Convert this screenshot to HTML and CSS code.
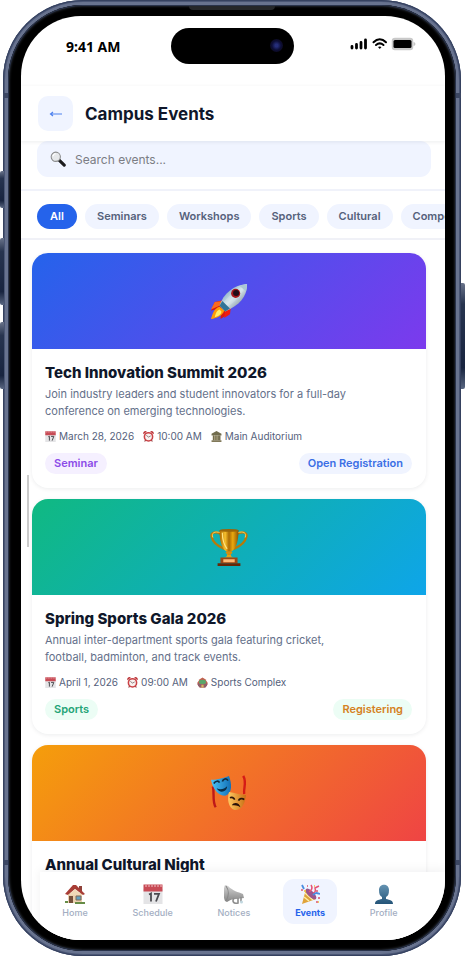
FILE: index.html
```html
<!DOCTYPE html>
<html lang="en">
<head>
<meta charset="UTF-8">
<meta name="viewport" content="width=device-width, initial-scale=1.0">
<title>Campus Events</title>
<link rel="stylesheet" href="styles.css">
</head>
<body>
<!-- shared icons -->
<svg class="sprite" aria-hidden="true">
    <defs>
        <linearGradient id="steel" x1="0" y1="0" x2="1" y2="1">
            <stop offset="0" stop-color="#3c7899"/>
            <stop offset="0.5" stop-color="#d5e6ee"/>
            <stop offset="1" stop-color="#51616f"/>
        </linearGradient>
        <linearGradient id="gold" x1="0" x2="1">
            <stop offset="0" stop-color="#a96500"/>
            <stop offset="0.3" stop-color="#f7c02c"/>
            <stop offset="0.5" stop-color="#a96a05"/>
            <stop offset="0.7" stop-color="#e9a90f"/>
            <stop offset="1" stop-color="#8b5204"/>
        </linearGradient>
        <linearGradient id="blueMask" x1="0" x2="1">
            <stop offset="0" stop-color="#4cc4f8"/>
            <stop offset="1" stop-color="#126fb5"/>
        </linearGradient>
        <linearGradient id="goldMask" x1="0" x2="1">
            <stop offset="0" stop-color="#ffc860"/>
            <stop offset="1" stop-color="#c86d13"/>
        </linearGradient>
        <linearGradient id="horn" x1="0" y1="0" x2="0" y2="1">
            <stop offset="0" stop-color="#d4d4d4"/>
            <stop offset="1" stop-color="#858585"/>
        </linearGradient>
        <linearGradient id="person" x1="0" y1="0" x2="0" y2="1">
            <stop offset="0" stop-color="#6493b2"/>
            <stop offset="1" stop-color="#245478"/>
        </linearGradient>
    </defs>
    <symbol id="icon-calendar" viewBox="0 0 20 20">
        <rect x="0.5" y="5" width="19" height="15" fill="#e4e4e6"/>
        <path d="M0.5 0.5h19v7h-19z" fill="#c84b55"/>
        <path d="M3 1v2M6 1v2M9 1v2M12 1v2M15 1v2M18 1v2" stroke="#f1c5c9" stroke-width="1"/>
        <path d="M6 10.500l2-1v8M11 9.800h5l-3 7.700" fill="none" stroke="#4b4b50" stroke-width="1.800"/>
    </symbol>
    <symbol id="icon-clock" viewBox="0 0 20 20">
        <path d="M1 6a4 4 0 0 1 6-5zM19 6a4 4 0 0 0-6-5z" fill="#b92f32"/>
        <path d="M5 16l-2 3M15 16l2 3" stroke="#8c3436" stroke-width="2"/>
        <circle cx="10" cy="10.500" r="7.500" fill="#f8f1ef" stroke="#ca4246" stroke-width="2.800"/>
        <path d="M6 8l4 3 4-2" fill="none" stroke="#6a5558" stroke-width="1.300"/>
    </symbol>
    <symbol id="icon-hall" viewBox="0 0 20 20">
        <path d="M10 0l9 5v3H1V5z" fill="#716c4d"/>
        <path d="M3 8h14v9H3z" fill="#bcb38c"/>
        <path d="M5 8v9M9 8v9M13 8v9M16 8v9" stroke="#514b35" stroke-width="1.700"/>
        <path d="M1 17h18v3H1z" fill="#81795a"/>
    </symbol>
    <symbol id="icon-stadium" viewBox="0 0 20 20">
        <path d="M1 10l4-6 5-3 5 3 4 6v4l-4 5H5l-4-5z" fill="#c2604f"/>
        <ellipse cx="10" cy="9" rx="6.500" ry="4" fill="#59a66a"/>
        <path d="M1 11c5 3 13 3 18 0l-1 5-3 3H5l-3-3z" fill="#8e5f6c"/>
        <path d="M8 14h4v5H8z" fill="#dcb55e"/>
    </symbol>
</svg>

<div class="phone">
    <span class="side-key key-action"></span>
    <span class="side-key key-up"></span>
    <span class="side-key key-down"></span>
    <span class="side-key key-power"></span>
    <span class="antenna antenna-top"></span>
    <span class="antenna antenna-bottom"></span>
    <div class="bezel">
        <span class="speaker"></span>
        <div class="screen">
            <div class="status-bar">
                <span class="time">9:41 AM</span>
                <span class="island"><span class="camera"></span></span>
                <svg class="status-icons" viewBox="0 0 66 14" aria-hidden="true">
                    <path d="M2 9.500v1.500M6.500 7.500v3.500M11 5.500v5.500M15.500 3v8" stroke="#000" stroke-width="2.800" stroke-linecap="round"/>
                    <path d="M23.500 5.200c4-4 8.500-4 12.500 0M26 8c2.500-2.200 5-2.200 7.500 0" fill="none" stroke="#000" stroke-width="2" stroke-linecap="round"/>
                    <path d="M28 10c1-.8 2.500-.8 3.500 0l-1.700 2z" fill="#000"/>
                    <rect x="42.500" y="1.500" width="20" height="11" rx="2.500" fill="#c9c9c9" stroke="#c9c9c9" stroke-width="1.500"/>
                    <rect x="43.500" y="3" width="18" height="8" rx="1.500" fill="#000"/>
                    <path d="M63.500 5c2.500.5 2.500 3.500 0 4z" fill="#c5c5c5"/>
                </svg>
            </div>

            <header class="app-header">
                <button class="back-btn" aria-label="Back">
                    <svg viewBox="0 0 14 10" aria-hidden="true"><path d="M13 5H2M4 3L1.500 5 4 7" fill="none" stroke="#4f82ee" stroke-width="1.200"/></svg>
                </button>
                <h1>Campus Events</h1>
            </header>

            <main class="content">
                <div class="search-wrap">
                    <label class="search-box">
                        <svg viewBox="0 0 18 18" aria-hidden="true">
                            <path d="M10 10l6 6" stroke="#1c1c1e" stroke-width="3.500" stroke-linecap="round"/>
                            <circle cx="6.500" cy="6.500" r="5.200" fill="#e6e8ea" stroke="#8b8c8d" stroke-width="1.200"/>
                            <path d="M3.500 6a3 3 0 0 1 3-3" fill="none" stroke="#fff" stroke-width="1.200"/>
                        </svg>
                        <input type="search" placeholder="Search events..." aria-label="Search events">
                    </label>
                </div>

                <div class="filters">
                    <button class="chip active">All</button>
                    <button class="chip">Seminars</button>
                    <button class="chip">Workshops</button>
                    <button class="chip">Sports</button>
                    <button class="chip">Cultural</button>
                    <button class="chip">Competitions</button>
                </div>

                <div class="event-list">
                    <article class="card">
                        <div class="banner banner-tech">
                            <svg viewBox="0 0 40 40" aria-hidden="true">
                                <path d="M15 19L5 21 1 30l11-2zM21 26l-2 8-8 5 1-12z" fill="#d71912"/>
                                <path d="M5 21l8-1-3 5-9 4z" fill="#fa6b20"/>
                                <path d="M22 26l-1 8-6 4 1-9z" fill="#f01d10"/>
                                <path d="M10 26c-6 2-7 7-9 13 6-1 12-3 14-9z" fill="#ff9d08"/>
                                <path d="M10 29c-4 2-4 5-5 8 4-1 7-3 7-6z" fill="#fff06c"/>
                                <path d="M10 25C14 12 25 3 39 2c0 14-8 22-23 29z" fill="url(#steel)"/>
                                <path d="M13 23C19 15 29 7 37 4c-3 9-10 17-22 24z" fill="#d9e7ec" opacity=".4"/>
                                <path d="M10 25l3-5 8 8-5 3z" fill="#307397"/>
                                <path d="M31 4l8-2-1 8z" fill="#abc7d5"/>
                                <circle cx="27" cy="12" r="4.800" fill="#a5171c"/>
                                <circle cx="27.500" cy="11.500" r="3.200" fill="#210d18"/>
                            </svg>
                        </div>
                        <div class="card-body">
                            <h2>Tech Innovation Summit 2026</h2>
                            <p class="desc">Join industry leaders and student innovators for a full-day conference on emerging technologies.</p>
                            <div class="meta">
                                <span><svg><use href="#icon-calendar"/></svg>March 28, 2026</span>
                                <span><svg><use href="#icon-clock"/></svg>10:00 AM</span>
                                <span><svg><use href="#icon-hall"/></svg>Main Auditorium</span>
                            </div>
                            <div class="tags">
                                <span class="tag tag-purple">Seminar</span>
                                <span class="tag tag-blue">Open Registration</span>
                            </div>
                        </div>
                    </article>

                    <article class="card">
                        <div class="banner banner-sports">
                            <svg viewBox="0 0 40 40" aria-hidden="true">
                                <path d="M11 6C5 3 0 5 2 10c1 5 6 9 13 12M29 6c6-3 11-1 9 4-1 5-6 9-13 12" fill="none" stroke="#b87908" stroke-width="2.400"/>
                                <path d="M11 5C5 3 1 5 3 10M29 5c6-2 10 0 8 5" fill="none" stroke="#ffd45a" stroke-width="1"/>
                                <path d="M10 2h20c0 11-2 20-8 23v5h-4v-5C12 22 10 13 10 2z" fill="url(#gold)"/>
                                <ellipse cx="20" cy="2.500" rx="10" ry="1.500" fill="#9b6509"/>
                                <path d="M13 5c0 9 2 13 5 17" fill="none" stroke="#ffe485" stroke-width="1.200"/>
                                <ellipse cx="20" cy="26" rx="3.500" ry="1.500" fill="#d58e12"/>
                                <path d="M14 31c4 0 4-2 4-3h4c0 1 0 3 4 3z" fill="#e1a119"/>
                                <path d="M11 31h18v6H11z" fill="#9c4715"/>
                                <path d="M14 33h12v3H14z" fill="#ffba76"/>
                                <path d="M8 37h24v3H8z" fill="#682706"/>
                            </svg>
                        </div>
                        <div class="card-body">
                            <h2>Spring Sports Gala 2026</h2>
                            <p class="desc">Annual inter-department sports gala featuring cricket, football, badminton, and track events.</p>
                            <div class="meta">
                                <span><svg><use href="#icon-calendar"/></svg>April 1, 2026</span>
                                <span><svg><use href="#icon-clock"/></svg>09:00 AM</span>
                                <span><svg><use href="#icon-stadium"/></svg>Sports Complex</span>
                            </div>
                            <div class="tags">
                                <span class="tag tag-green">Sports</span>
                                <span class="tag tag-amber">Registering</span>
                            </div>
                        </div>
                    </article>

                    <article class="card">
                        <div class="banner banner-culture">
                            <svg viewBox="0 0 40 40" aria-hidden="true">
                                <path d="M3 13c2 8-1 15 3 22" fill="none" stroke="#be1919" stroke-width="2.500"/>
                                <path d="M35 2c4 7 0 13 1 19" fill="none" stroke="#d51b16" stroke-width="2.500"/>
                                <path d="M1 6c8 0 13-2 19-4 3 8 4 18-4 21C8 23 3 15 1 6z" fill="url(#blueMask)"/>
                                <path d="M4 10c2-3 5-3 6-1M13 8c1-3 4-4 6-1" fill="none" stroke="#102d43" stroke-width="1.800"/>
                                <path d="M7 15c4 2 8 1 11-2 0 6-8 8-11 2z" fill="#082c45"/>
                                <path d="M20 19c6 1 11 3 18 3-1 8-4 16-12 16-7-2-8-12-6-19z" fill="url(#goldMask)"/>
                                <path d="M21 25c2-1 4 0 5 2M30 28c1-2 4-3 6-1" fill="none" stroke="#2c160a" stroke-width="1.800"/>
                                <path d="M23 33c2-4 8-3 9 2-3-2-6-2-9-2z" fill="#291108"/>
                            </svg>
                        </div>
                        <div class="card-body">
                            <h2>Annual Cultural Night</h2>
                        </div>
                    </article>
                </div>
            </main>

            <span class="scroll-thumb"></span>

            <nav class="bottom-nav">
                <a href="#">
                    <svg viewBox="0 0 20 20" aria-hidden="true">
                        <path d="M3 9h14v10H3z" fill="#ead1af"/>
                        <path d="M14 2h3v6h-3z" fill="#8f4139"/>
                        <path d="M0 10L8 1h3l9 9-2 1-8-6-7 6z" fill="#a83d36"/>
                        <path d="M3 11l7-6 7 6z" fill="#f0d9b8"/>
                        <path d="M4 12h4v7H4z" fill="#76503b"/>
                        <path d="M11 12h5v4h-5z" fill="#62a1bf" stroke="#7f6b5b"/>
                        <path d="M0 17h3v2H0zM10 18h10v2H10z" fill="#668c46"/>
                    </svg>
                    Home
                </a>
                <a href="#"><svg><use href="#icon-calendar"/></svg>Schedule</a>
                <a href="#">
                    <svg viewBox="0 0 20 20" aria-hidden="true">
                        <path d="M1 1l3 1c5 5 10 6 15 8l1 4-8 1c-4 0-6 1-9 3l-2-1C-1 12-1 6 1 1z" fill="url(#horn)"/>
                        <path d="M2 2c3 4 3 10 0 15" fill="none" stroke="#888" stroke-width="1.200"/>
                        <path d="M10 14c-2 3-1 6 4 5v-5M17 13v5" fill="none" stroke="#8d8d8d" stroke-width="1.600"/>
                        <circle cx="17.500" cy="18" r="1.500" fill="#c1d7df"/>
                    </svg>
                    Notices
                </a>
                <a href="#" class="active" aria-current="page">
                    <svg viewBox="0 0 20 20" aria-hidden="true">
                        <path d="M6 5l10 10-14 5z" fill="#e0a43b"/>
                        <path d="M5 9l8 7M4 13l5 4" stroke="#fff0a5" stroke-width="1.500"/>
                        <ellipse cx="11" cy="10" rx="3" ry="7" transform="rotate(-45 11 10)" fill="#9b568c"/>
                        <path d="M9 8c3-2 4-4 2-7M13 9c2 0 3-2 2-5l4-2" fill="none" stroke="#e65576" stroke-width="1.500"/>
                        <path d="M13 11c3-3 4-2 7-1M2 1l2 4" fill="none" stroke="#498ce1" stroke-width="1.800"/>
                        <path d="M1 6h2M7 2h1M16 7h2M19 13v2M16 18h2" stroke="#dc566a" stroke-width="1.600"/>
                        <path d="M4 7h2M14 2h1M18 18h1" stroke="#f0bd36" stroke-width="1.500"/>
                    </svg>
                    Events
                </a>
                <a href="#">
                    <svg viewBox="0 0 20 20" aria-hidden="true">
                        <path d="M5 6c0-7 10-7 10 0 0 4-1 6-3 7v2c4 1 7 1 7 5H1c0-4 3-4 7-5v-2C6 12 5 10 5 6z" fill="url(#person)"/>
                    </svg>
                    Profile
                </a>
            </nav>
        </div>
    </div>
</div>
</body>
</html>
```
FILE: styles.css
```css
* {
    box-sizing: border-box;
}
body, html {
    height: 100%;
    margin: 0;
    background: #fff;
    font-family: Inter, "Liberation Sans", sans-serif;
}
h1, h2, p {
    margin: 0;
}
button, input {
    font-family: inherit;
    border: none;
}
button {
    cursor: pointer;
}
a {
    text-decoration: none;
}
.sprite {
    position: absolute;
    width: 0;
    height: 0;
}

/* phone frame */
.phone {
    position: relative;
    height: 100vh;
    margin: 0 4px 0 3px;
    padding: 5px;
    border-radius: 80px;
    background: #68738f;
    box-shadow: inset 0 0 0 1px #35415f, inset 0 0 0 2px #4a5675;
}
.bezel {
    position: relative;
    height: 100%;
    padding: 11px 11px 11px 13px;
    border-radius: 75px;
    background: #000;
    box-shadow: inset 0 0 0 1px #29334b, inset 0 0 2px 2px #1d2026;
}
.speaker {
    position: absolute;
    top: 1px;
    left: 50%;
    width: 86px;
    height: 4px;
    margin-left: -43px;
    border-radius: 0 0 4px 4px;
    background: #25272a;
}
.side-key {
    position: absolute;
    left: -3px;
    width: 4px;
    border-radius: 2px 0 0 2px;
    background: linear-gradient(#69738a, #27344f 20%, #18243f 80%, #596681);
}
.key-action {
    top: 171px;
    height: 37px;
}
.key-up {
    top: 238px;
    height: 67px;
}
.key-down {
    top: 322px;
    height: 67px;
}
.key-power {
    top: 283px;
    left: auto;
    right: -4px;
    height: 106px;
    border-radius: 0 2px 2px 0;
}
.antenna {
    position: absolute;
    left: 0;
    right: 0;
    height: 5px;
    background: #3c4763;
}
.antenna-top {
    top: 93px;
}
.antenna-bottom {
    bottom: 91px;
}
.screen {
    position: relative;
    display: flex;
    flex-direction: column;
    height: 100%;
    overflow: hidden;
    border-radius: 60px;
    background: #fff;
}

/* status bar */
.status-bar {
    position: relative;
    display: flex;
    flex-shrink: 0;
    justify-content: space-between;
    align-items: center;
    height: 70px;
    padding: 0 29px 10px 45px;
}
.time {
    font-family: "Noto Sans", sans-serif;
    font-size: 14px;
    font-weight: 700;
}
.island {
    position: absolute;
    top: 12px;
    left: 50%;
    width: 123px;
    height: 36px;
    margin-left: -62px;
    border-radius: 18px;
    background: #000;
}
.camera {
    position: absolute;
    top: 11px;
    right: 11px;
    width: 13px;
    height: 13px;
    border-radius: 50%;
    background: radial-gradient(#252d79 15%, #0c0d35 50%, #0d080d);
}
.status-icons {
    width: 66px;
    height: 14px;
    margin-bottom: 4px;
}

/* header */
.app-header {
    position: relative;
    z-index: 1;
    display: flex;
    flex-shrink: 0;
    align-items: center;
    gap: 12px;
    height: 55px;
    padding: 0 17px;
    background: #fff;
    box-shadow: 0 1px 4px rgba(15, 23, 42, 0.08);
}
.back-btn {
    display: flex;
    justify-content: center;
    align-items: center;
    width: 35px;
    height: 35px;
    padding: 0;
    border-radius: 10px;
    background: #f0f4ff;
}
.back-btn svg {
    width: 14px;
    height: 10px;
}
.app-header h1 {
    color: #0f172a;
    font-size: 17px;
    font-weight: 700;
}

/* search and filters */
.content {
    flex: 1;
    min-height: 0;
    overflow: hidden;
}
.search-wrap {
    padding: 0 14px 12px 16px;
    border-bottom: 2px solid #f0f2fa;
}
.search-box {
    display: flex;
    align-items: center;
    gap: 9px;
    height: 36px;
    padding: 0 13px;
    border-radius: 11px;
    background: #f0f4ff;
}
.search-box svg {
    flex-shrink: 0;
    width: 16px;
    height: 16px;
}
.search-box input {
    flex: 1;
    min-width: 0;
    padding: 0;
    outline: none;
    background: transparent;
    color: #0f172a;
    font-size: 12px;
}
.search-box input::placeholder {
    color: #7b7d84;
}
.filters {
    display: flex;
    gap: 8px;
    overflow: hidden;
    padding: 13px 0 9px 16px;
    border-bottom: 2px solid #f0f1f7;
}
.chip {
    flex-shrink: 0;
    min-width: 40px;
    padding: 0 12px;
    border-radius: 13px;
    background: #f0f4ff;
    color: #55617b;
    font-size: 11px;
    font-weight: 600;
    line-height: 25px;
}
.chip.active {
    background: #2563eb;
    color: #fff;
}

/* events */
.event-list {
    display: flex;
    flex-direction: column;
    gap: 11px;
    padding: 13px 19px 13px 11px;
}
.card {
    overflow: hidden;
    border-radius: 16px;
    background: #fff;
    box-shadow: 0 1px 4px rgba(15, 23, 42, 0.08);
}
.card:last-child {
    min-height: 235px;
}
.banner {
    display: flex;
    justify-content: center;
    align-items: center;
    height: 96px;
}
.banner svg {
    width: 38px;
    height: 38px;
}
.banner-tech {
    background: linear-gradient(135deg, #2563eb, #7c3aed);
}
.banner-sports {
    background: linear-gradient(135deg, #10b981, #0ea5e9);
}
.banner-culture {
    background: linear-gradient(135deg, #f59e0b, #ef4444);
}
.card-body {
    padding: 13px 14px 14px 13px;
}
.card h2 {
    margin-bottom: 2px;
    color: #0f172a;
    font-size: 15px;
    font-weight: 800;
    line-height: 22px;
}
.desc {
    margin-bottom: 8px;
    padding-right: 45px;
    color: #64708a;
    font-size: 11px;
    line-height: 17px;
}
.meta {
    display: flex;
    gap: 9px;
    margin-bottom: 9px;
    color: #55617b;
    font-size: 10px;
    line-height: 16px;
}
.meta span {
    display: flex;
    align-items: center;
    gap: 3px;
}
.meta svg {
    width: 11px;
    height: 11px;
}
.tags {
    display: flex;
    justify-content: space-between;
}
.tag {
    padding: 0 9px;
    border-radius: 11px;
    font-size: 11px;
    font-weight: 600;
    line-height: 21px;
}
.tag-purple {
    background: #f5f0ff;
    color: #8b4be8;
}
.tag-blue {
    background: #f0f4ff;
    color: #3b6fe5;
}
.tag-green {
    background: #ecfdf5;
    color: #24a477;
}
.tag-amber {
    background: #ecfdf5;
    color: #d58122;
}
.scroll-thumb {
    position: absolute;
    top: 459px;
    left: 6px;
    width: 2px;
    height: 72px;
    background: #cbcbcb;
}

/* bottom navigation */
.bottom-nav {
    position: absolute;
    right: 0;
    bottom: 0;
    left: 19px;
    display: flex;
    justify-content: space-around;
    padding: 7px 25px 16px 0;
    background: #fff;
    box-shadow: 0 -2px 10px rgba(15, 23, 42, 0.06);
}
.bottom-nav a {
    display: flex;
    flex-direction: column;
    align-items: center;
    gap: 2px;
    padding: 5px 12px;
    border-radius: 11px;
    color: #a3aec2;
    font-size: 9px;
    font-weight: 500;
    line-height: 13px;
}
.bottom-nav a.active {
    background: #f0f4ff;
    color: #2563eb;
    font-weight: 700;
}
.bottom-nav svg {
    width: 20px;
    height: 20px;
}
```
